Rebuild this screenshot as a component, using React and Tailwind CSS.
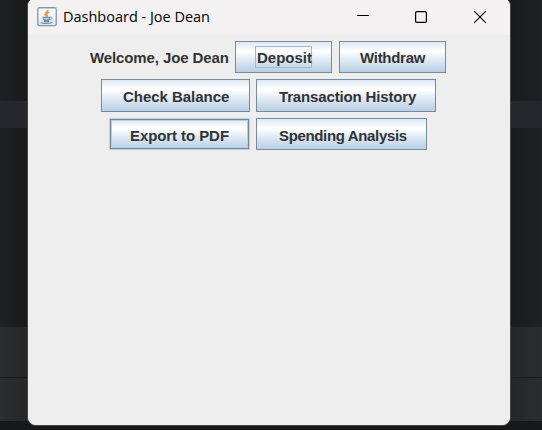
function JavaIcon() {
  return (
    <svg width="20" height="20" viewBox="0 0 20 20" fill="none" className="shrink-0">
      <defs>
        <linearGradient id="cupTile" x1="0" y1="0" x2="0" y2="1">
          <stop offset="0" stopColor="#ffffff" />
          <stop offset="1" stopColor="#dfe3e6" />
        </linearGradient>
      </defs>
      <rect x="0.75" y="0.75" width="18.5" height="17.9" rx="1.5" fill="url(#cupTile)" stroke="#7f9bb0" strokeWidth="1.3" />
      <path d="M10.8 2.800c.8 1.700-3.300 3-2.600 4.700.3.800 1 1.300 1.300 2.200M12.200 5.200c-2 .8-3 1.500-2.400 2.500.5.800.6 1.200 0 2" stroke="#ee9448" strokeWidth="1.700" />
      <path d="M5.500 10.500h7.500M6 12.200c1.800.9 5.200.9 6.800 0M6.800 14c1.500.7 4 .7 5.400 0" stroke="#6f8fa8" strokeWidth="1.400" />
      <path d="M13 10.400c2.600-.9 2.800 1.400.3 2.500" stroke="#7593aa" strokeWidth="1" />
      <path d="M4.300 15.200c-.6 1.600 8.500 1.700 11.200 0" stroke="#7593aa" strokeWidth="1.200" />
    </svg>
  );
}

const face = "bg-[linear-gradient(to_bottom,#dde8f3_0%,#ffffff_30%,#fafcfe_36%,#dde8f3_62%,#b8cfe5_100%)]";

function Button({ label, className = "", focused = false, pressed = false }) {
  return (
    <button
      className={`relative shrink-0 whitespace-nowrap border text-left ${pressed ? "border-[#b8cfe5]" : "border-[#7a8a99]"} ${face} ${className}`}
    >
      {pressed && (
        <span className="absolute inset-0 border border-[#7a8a99]">
          <span className="absolute inset-0 border border-[#b8cfe5]" />
        </span>
      )}
      {focused && <span className="absolute left-[19px] top-[4px] h-[22px] w-[57px] border border-[#a3b8cc]" />}
      <span className="relative top-px block leading-5">{label}</span>
    </button>
  );
}

export default function App() {
  return (
    <div className="relative h-[430px] w-[542px] overflow-hidden bg-[#1a1b1d]">
      <div className="flex h-full flex-col">
        <div className="h-[101px] bg-[linear-gradient(to_right,#1e2023,#191a1b_28px,#191a1b_510px,#1e2023)]" />
        <div className="h-[27px] bg-[#25272c]" />
        <div className="h-[199px] bg-[linear-gradient(to_right,#1e2023,#191a1b_28px,#191a1b_510px,#1e2023)]" />
        <div className="h-[50px] bg-[linear-gradient(to_right,#2b2d30,#252628_28px,#252628_510px,#2b2d30)]" />
        <div className="h-px bg-[#1b1c1e]" />
        <div className="h-[43px] bg-[linear-gradient(to_right,#2b2d30,#252628_28px,#252628_510px,#2b2d30)]" />
        <div className="flex-1 bg-[#17181b]" />
      </div>

      <div className="absolute left-[27px] top-[-3px] flex h-[429px] w-[484px] flex-col overflow-hidden rounded-[9px] border border-[#454545] bg-[#eeeeee]">
        <header className="flex h-[37px] shrink-0 items-center bg-[#f4f1f2] pl-[9px] pt-px">
          <JavaIcon />
          <span className="ml-[6px] w-[148px] whitespace-nowrap font-['Open_Sans','Noto_Sans',sans-serif] text-[15px] text-black">
            <svg width="147" height="20" className="block overflow-visible">
              <text x="0" y="15" textLength="147" lengthAdjust="spacingAndGlyphs">Dashboard - Joe Dean</text>
            </svg>
          </span>
          <svg width="12" height="12" className="ml-[146px]" stroke="#000" fill="none">
            <path d="M0 4.500h12" />
          </svg>
          <svg width="12" height="12" className="ml-[46px]" stroke="#000" fill="none" strokeWidth="1.200">
            <rect x="0.600" y="0.600" width="10.800" height="10.800" rx="1.200" />
          </svg>
          <svg width="12" height="12" className="ml-[47px]" stroke="#000" fill="none" strokeWidth="1.100">
            <path d="M0.300 0.300l11.400 11.400M11.700 0.300L0.300 11.700" />
          </svg>
        </header>

        <main className="flex flex-1 flex-col bg-[#eeeeee] pt-[6px] font-['Liberation_Sans',Arial,sans-serif] text-[15px] font-bold leading-5 text-[#333333]">
          <div className="flex h-[32px] pl-[62px]">
            <div className="w-[145px] whitespace-nowrap pt-[7px] tracking-[-0.11px]">Welcome, Joe Dean</div>
            <Button label="Deposit" focused className="h-[32px] w-[97px] pl-[21px]" />
            <Button label="Withdraw" className="ml-[7px] h-[32px] w-[107px] pl-[20px] tracking-[-0.28px]" />
          </div>
          <div className="mt-[6px] flex h-[33px] gap-[6px] pl-[73px]">
            <Button label="Check Balance" className="h-[33px] w-[149px] pl-[21px] tracking-[-0.03px]" />
            <Button label="Transaction History" className="h-[33px] w-[180px] pl-[22px] tracking-[-0.15px]" />
          </div>
          <div className="mt-[6px] flex h-[32px] gap-[6px] pl-[81px]">
            <Button label="Export to PDF" pressed className="h-[32px] w-[141px] pl-[20px] pt-[2px] tracking-[-0.08px]" />
            <Button label="Spending Analysis" className="h-[32px] w-[171px] pl-[22px] pt-[2px] tracking-[-0.35px]" />
          </div>
        </main>
      </div>
    </div>
  );
}
